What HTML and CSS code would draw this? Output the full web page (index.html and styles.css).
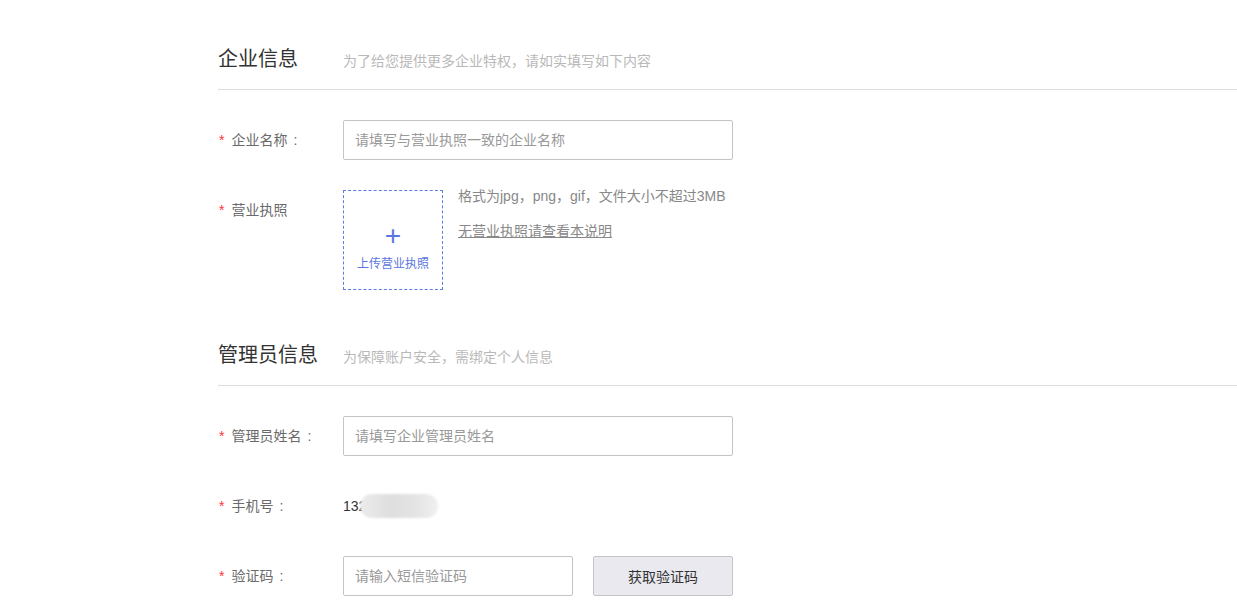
FILE: index.html
```html
<!DOCTYPE html>
<html lang="zh-CN">
<head>
  <meta charset="UTF-8">
  <title>企业认证</title>
  <link rel="stylesheet" href="styles.css">
</head>
<body>

<div class="pagina">

  <div class="seccion">
    <div class="cabecera">
      <h2>企业信息</h2>
      <span class="sub sub-ancho">为了给您提供更多企业特权，请如实填写如下内容</span>
    </div>

    <div class="fila">
      <label class="etiqueta"><i>*</i>企业名称<b>:</b></label>
      <input class="campo" type="text" placeholder="请填写与营业执照一致的企业名称">
    </div>

    <div class="fila">
      <label class="etiqueta"><i>*</i>营业执照</label>
      <div class="subir">
        <span class="mas">+</span>
        <span class="subir-texto">上传营业执照</span>
      </div>
      <div class="ayuda">
        <p>格式为jpg，png，gif，文件大小不超过3MB</p>
        <a href="#">无营业执照请查看本说明</a>
      </div>
    </div>
  </div>

  <div class="seccion seccion-2">
    <div class="cabecera">
      <h2>管理员信息</h2>
      <span class="sub">为保障账户安全，需绑定个人信息</span>
    </div>

    <div class="fila">
      <label class="etiqueta"><i>*</i>管理员姓名<b>:</b></label>
      <input class="campo" type="text" placeholder="请填写企业管理员姓名">
    </div>

    <div class="fila">
      <label class="etiqueta"><i>*</i>手机号<b>:</b></label>
      <span class="telefono">132</span>
      <span class="borroso"></span>
    </div>

    <div class="fila">
      <label class="etiqueta"><i>*</i>验证码<b>:</b></label>
      <input class="campo campo-corto" type="text" placeholder="请输入短信验证码">
      <button class="btn-codigo">获取验证码</button>
    </div>
  </div>

</div>

</body>
</html>
```

FILE: styles.css
```css
body {
  margin: 0;
  font-family: "Liberation Sans", "Noto Sans CJK SC", sans-serif;
  background: #fff;
  color: #333;
}
.pagina {
  padding: 44px 0 0 218px;
}
.seccion-2 {
  margin-top: 50px;
}
.cabecera {
  display: flex;
  align-items: baseline;
  border-bottom: 1px solid #dcdcdc;
  padding-bottom: 15px;
}
.cabecera h2 {
  margin: 0;
  font-size: 20px;
  font-weight: normal;
  line-height: 30px;
  color: #333;
}
.sub {
  font-size: 14px;
  color: #b9b9b9;
  margin-left: 25px;
}
.sub-ancho {
  margin-left: 45px;
}
.fila {
  display: flex;
  align-items: flex-start;
  margin-top: 30px;
}
.etiqueta {
  width: 125px;
  flex-shrink: 0;
  font-size: 14px;
  line-height: 40px;
  color: #6a6a6a;
}
.etiqueta i {
  font-style: normal;
  color: #f33;
  margin: 0 7px 0 1px;
}
.etiqueta b {
  font-weight: normal;
  margin-left: 6px;
}
.campo {
  box-sizing: border-box;
  width: 390px;
  height: 40px;
  border: 1px solid #c4c4c8;
  border-radius: 2px;
  padding: 0 11px;
  font-family: inherit;
  font-size: 14px;
  color: #333;
  outline: none;
}
.campo::placeholder {
  color: #999;
}
.campo-corto {
  width: 230px;
}
.subir {
  box-sizing: border-box;
  width: 100px;
  height: 100px;
  border: 1px dashed #5b7ee6;
  display: flex;
  flex-direction: column;
  align-items: center;
  color: #5a76e0;
}
.mas {
  font-size: 28px;
  font-weight: 300;
  line-height: 28px;
  margin-top: 31px;
}
.subir-texto {
  font-size: 12px;
  margin-top: 4px;
}
.ayuda {
  margin-left: 15px;
  font-size: 14px;
  color: #888;
}
.ayuda p {
  margin: -4px 0 0;
  line-height: 20px;
}
.ayuda a {
  display: inline-block;
  margin-top: 15px;
  color: #888;
  line-height: 20px;
}
.telefono {
  font-size: 14px;
  line-height: 40px;
  color: #333;
}
.borroso {
  width: 78px;
  height: 24px;
  margin: 8px 0 0 -6px;
  border-radius: 12px;
  background: linear-gradient(90deg, #ececec, #dedede 40%, #e4e4e4 70%, #f0f0f0);
  filter: blur(1px);
}
.btn-codigo {
  box-sizing: border-box;
  width: 140px;
  height: 40px;
  margin-left: 20px;
  background: #e9e9ef;
  border: 1px solid #c4c4c8;
  border-radius: 2px;
  font-family: inherit;
  font-size: 14px;
  color: #333;
}
```
